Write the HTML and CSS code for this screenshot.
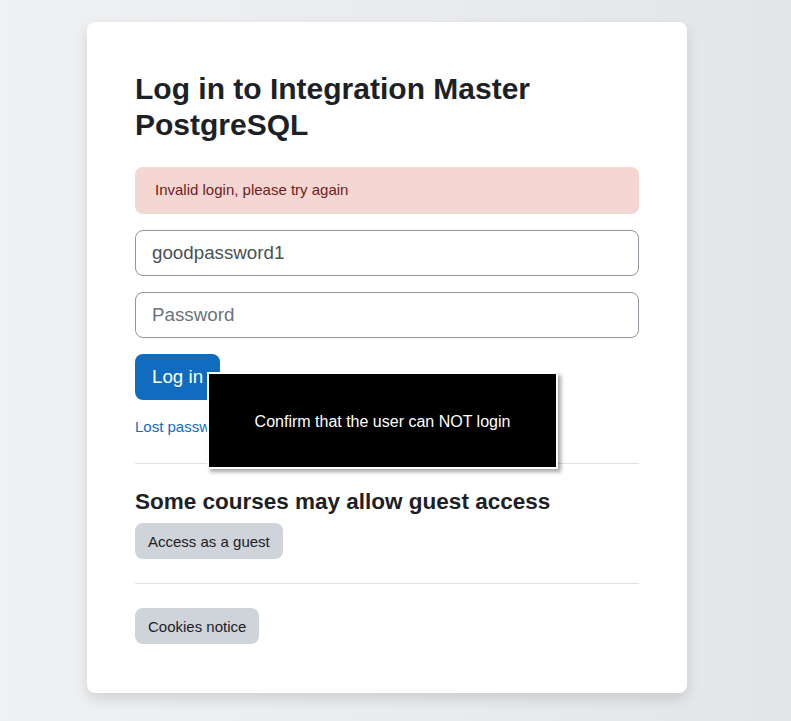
FILE: index.html
```html
<!DOCTYPE html>
<html lang="en">
<head>
<meta charset="utf-8">
<title>Log in to Integration Master PostgreSQL</title>
<link rel="stylesheet" href="styles.css">
</head>
<body>
<div class="page">
  <div class="card">
    <h1 class="title">Log in to Integration Master PostgreSQL</h1>
    <div class="alert">Invalid login, please try again</div>
    <form class="login-form">
      <input class="field" type="text" value="goodpassword1">
      <input class="field" type="password" placeholder="Password">
      <button class="btn-primary" type="button">Log in</button>
    </form>
    <a class="lost" href="#">Lost password?</a>
    <hr class="divider">
    <h2 class="subtitle">Some courses may allow guest access</h2>
    <button class="btn-secondary" type="button">Access as a guest</button>
    <hr class="divider divider-second">
    <button class="btn-secondary" type="button">Cookies notice</button>
    <div class="tour-step">Confirm that the user can NOT login</div>
  </div>
</div>
</body>
</html>
```
FILE: styles.css
```css
html, body {
  margin: 0;
  padding: 0;
  height: 100%;
}
body {
  font-family: "Liberation Sans", Arial, sans-serif;
  color: #1d2125;
  background: linear-gradient(to right, #f0f1f3 0%, #e3e6e9 100%);
}
.page {
  padding: 22px 0 0 87px;
}
.card {
  position: relative;
  box-sizing: border-box;
  width: 600px;
  padding: 48px 48px 49px;
  background: #fff;
  border-radius: 8px;
  box-shadow: 0 6px 14px rgba(0, 0, 0, 0.13);
}
.title {
  margin: 1px 0 24px;
  font-size: 30px;
  line-height: 36px;
  font-weight: 700;
  color: #1d2125;
}
.alert {
  padding: 12px 20px;
  font-size: 15px;
  line-height: 22.5px;
  color: #6e211e;
  background: #f4d6d2;
  border-radius: 8px;
  margin-bottom: 16.5px;
}
.login-form {
  display: flex;
  flex-direction: column;
  align-items: flex-start;
  margin: 0;
}
.field {
  box-sizing: border-box;
  width: 100%;
  height: 46px;
  margin: 0 0 16px;
  padding: 8px 16px;
  font-family: inherit;
  font-size: 18.75px;
  color: #495057;
  border: 1px solid #8f959e;
  border-radius: 8px;
  background: #fff;
  outline: none;
}
.field::placeholder {
  color: #6a737b;
}
.btn-primary {
  height: 46px;
  padding: 8px 17px;
  font-family: inherit;
  font-size: 18.75px;
  color: #fff;
  background: #0f6cbf;
  border: none;
  border-radius: 8px;
}
.lost {
  display: block;
  margin-top: 15px;
  font-size: 15px;
  line-height: 23px;
  color: #0f6cbf;
  text-decoration: none;
}
.divider {
  border: 0;
  border-top: 1px solid #dee2e6;
  margin: 25px 0 24px;
}
.divider-second {
  margin: 24px 0 24px;
}
.subtitle {
  margin: 0 0 8px;
  font-size: 22.5px;
  line-height: 27px;
  font-weight: 700;
}
.btn-secondary {
  display: block;
  height: 36px;
  padding: 0 13px;
  font-family: inherit;
  font-size: 15px;
  color: #1d2125;
  background: #ced4da;
  border: none;
  border-radius: 8px;
}
.tour-step {
  position: absolute;
  left: 120px;
  top: 350px;
  box-sizing: border-box;
  width: 351px;
  height: 97px;
  display: flex;
  align-items: center;
  justify-content: center;
  padding-top: 2px;
  background: #000;
  color: #fff;
  font-size: 16px;
  border: 2px solid #fff;
  box-shadow: 3px 3px 4px rgba(0, 0, 0, 0.35);
}
```
